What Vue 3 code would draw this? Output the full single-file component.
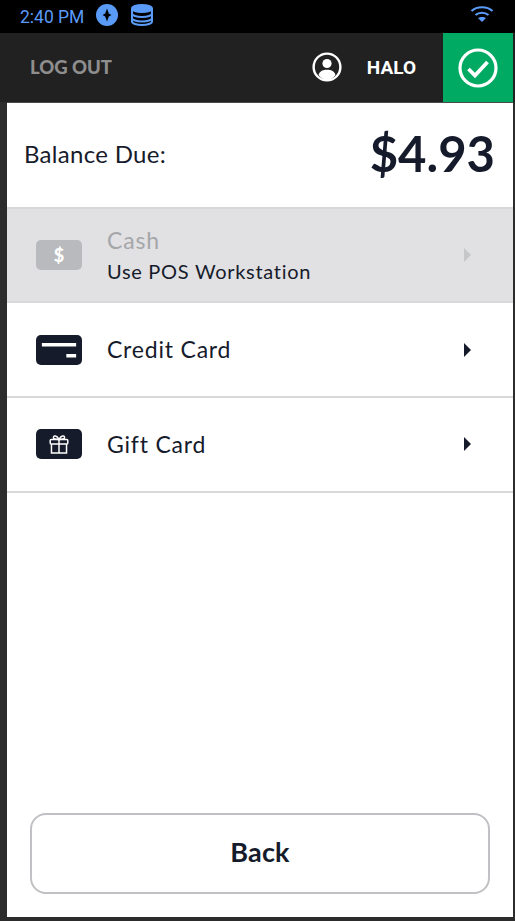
<template>
  <div class="device">
    <div class="status-bar">
      <span class="clock">2:40 PM</span>
      <svg class="status-icon" width="22" height="22" viewBox="0 0 22 22">
        <circle cx="11" cy="11" r="11" fill="#5b9bf8" />
        <path d="M11 4.500 L12.800 9.400 L15.500 11 L12.800 12.600 L11 17.500 L9.200 12.600 L6.500 11 L9.200 9.400 Z" fill="#000" />
      </svg>
      <svg class="db-icon" width="24" height="22" viewBox="0 0 24 22" fill="none" stroke="#5b9bf8" stroke-width="2">
        <ellipse cx="12" cy="4.500" rx="10" ry="3.500" fill="#5b9bf8" />
        <path d="M2 4.500 V17.500 C2 19.500 6.500 21 12 21 C17.500 21 22 19.500 22 17.500 V4.500" />
        <path d="M2 9.500 C2 11.500 6.500 13 12 13 C17.500 13 22 11.500 22 9.500" />
        <path d="M2 14 C2 16 6.500 17.500 12 17.500 C17.500 17.500 22 16 22 14" />
      </svg>
      <svg class="wifi-icon" width="24" height="18" viewBox="0 0 24 18" fill="none" stroke="#5b9bf8" stroke-width="2.200">
        <path d="M1.500 6 C7 1 17 1 22.500 6" />
        <path d="M5.500 10 C9 7 15 7 18.500 10" />
        <path d="M8 13 L12 17 L16 13 C14 11.500 10 11.500 8 13 Z" fill="#5b9bf8" stroke="none" />
      </svg>
    </div>

    <header class="top-bar">
      <span class="logout">LOG OUT</span>
      <svg class="user-icon" width="30" height="30" viewBox="0 0 30 30">
        <circle cx="15" cy="15" r="13.400" fill="none" stroke="#fff" stroke-width="2.400" />
        <circle cx="15" cy="11.500" r="4.600" fill="#fff" />
        <path d="M6.500 23 C8 18.800 11 17.800 15 17.800 C19 17.800 22 18.800 23.500 23 C21 26.500 18 28 15 28 C12 28 9 26.500 6.500 23 Z" fill="#fff" />
      </svg>
      <span class="user-name">HALO</span>
      <div class="check-box">
        <svg width="40" height="40" viewBox="0 0 40 40" fill="none" stroke="#fff">
          <circle cx="20" cy="20" r="18" stroke-width="3.200" />
          <path d="M10.500 21 L17 27.500 L29.500 14" stroke-width="3.800" />
        </svg>
      </div>
    </header>

    <main class="panel">
      <div class="balance">
        <span class="balance-label">Balance Due:</span>
        <span class="balance-value">$4.93</span>
      </div>

      <div class="tender disabled">
        <div class="tender-icon cash-icon">$</div>
        <div class="tender-text">
          <span class="tender-name">Cash</span>
          <span class="tender-note">Use POS Workstation</span>
        </div>
        <span class="arrow"></span>
      </div>

      <div class="tender">
        <svg class="tender-icon" width="46" height="30" viewBox="0 0 47 30" preserveAspectRatio="none">
          <rect width="47" height="30" rx="5" fill="#161b2b" />
          <rect x="6" y="8" width="35" height="3.500" fill="#fff" />
          <rect x="31" y="19" width="10" height="3.500" fill="#fff" />
        </svg>
        <div class="tender-text">
          <span class="tender-name">Credit Card</span>
        </div>
        <span class="arrow"></span>
      </div>

      <div class="tender gift">
        <svg class="tender-icon" width="46" height="30" viewBox="0 0 47 30" preserveAspectRatio="none">
          <rect width="47" height="30" rx="5" fill="#161b2b" />
          <g fill="none" stroke="#fff" stroke-width="1.500">
            <rect x="14.500" y="10.500" width="18" height="4.500" rx="1" />
            <path d="M15.800 15 V24 H31.200 V15" />
            <path d="M23.500 10.500 V24" />
            <path d="M23.500 10.500 C21.500 6.500 18 6 17.800 8.500 C17.700 10 19.500 10.500 23.500 10.500 C27.500 10.500 29.300 10 29.200 8.500 C29 6 25.500 6.500 23.500 10.500 Z" />
          </g>
        </svg>
        <div class="tender-text">
          <span class="tender-name">Gift Card</span>
        </div>
        <span class="arrow"></span>
      </div>

      <div class="footer">
        <button class="back-btn">Back</button>
      </div>
    </main>
  </div>
</template>

<script setup>
</script>

<style>
html, body { margin: 0; background: #2c2c2c; }
</style>

<style scoped>
.device { display: flex; flex-direction: column; height: 921px; width: 515px; overflow: hidden; background: #2c2c2c; font-family: 'Lato', sans-serif; color: #161b2b; }

.status-bar { display: flex; align-items: center; height: 33px; background: #000; padding: 0 20px; box-sizing: border-box; }
.clock { font-family: 'Roboto', sans-serif; font-size: 17.500px; color: #5b9bf8; }
.status-icon { margin-left: 12px; margin-top: -3px; }
.db-icon { margin-left: 12px; margin-top: -3px; }
.wifi-icon { margin-left: auto; margin-right: 1px; margin-top: -6px; }

.top-bar { display: flex; align-items: center; height: 69px; background: #212121; padding-left: 30px; flex-shrink: 0; }
.logout { font-size: 18.500px; font-weight: 900; color: #8e8e8e; margin-top: -2px; }
.user-icon { margin-left: auto; margin-top: -2px; }
.user-name { font-family: 'Roboto', sans-serif; font-size: 19px; font-weight: 700; color: #fff; margin-left: 25px; margin-right: 27px; }
.check-box { display: flex; align-items: center; justify-content: center; width: 70px; height: 69px; background: #00aa63; margin-right: 2px; }

.panel { display: flex; flex-direction: column; flex: 1; margin: 0 2px 4px 7px; background: #fff; border-top: 1px solid #4a4a4a; }

.balance { display: flex; align-items: center; justify-content: space-between; height: 104px; padding: 0 18px 4px 17px; box-sizing: border-box; flex-shrink: 0; }
.balance-label { font-size: 24px; letter-spacing: 0.3px; }
.balance-value { font-size: 49px; font-weight: 700; }

.tender { display: flex; align-items: center; height: 95px; flex-shrink: 0; box-sizing: border-box; border-bottom: 2px solid #d8d8da; padding-left: 29px; padding-right: 42px; }
.disabled { background: #e1e1e3; border-top: 2px solid #d8d8da; height: 96px; }
.gift { padding-bottom: 2px; }
.tender-icon { width: 46px; height: 30px; flex-shrink: 0; }
.cash-icon { display: flex; align-items: center; justify-content: center; background: #b9babd; border-radius: 5px; color: #fff; font-size: 18px; font-weight: 900; }
.tender-text { display: flex; flex-direction: column; margin-left: 25px; margin-top: -2px; flex: 1; }
.tender-name { font-size: 23px; letter-spacing: 0.8px; }
.tender-note { font-size: 20px; letter-spacing: 0.7px; margin-top: 5px; }
.disabled .tender-name { color: #a5a6a9; }
.gift .tender-text { margin-top: 0; }
.arrow { width: 0; height: 0; border-left: 7px solid #161b2b; border-top: 7px solid transparent; border-bottom: 7px solid transparent; }
.disabled .arrow { border-left-color: #c6c7c9; }

.footer { display: flex; margin-top: auto; padding: 0 23px 23px; }
.back-btn { width: 100%; height: 81px; padding-bottom: 6px; background: #fff; border: 2px solid #c0c1c4; border-radius: 16px; font-family: 'Lato', sans-serif; font-size: 27px; font-weight: 700; letter-spacing: 0.2px; color: #161b2b; }
</style>
